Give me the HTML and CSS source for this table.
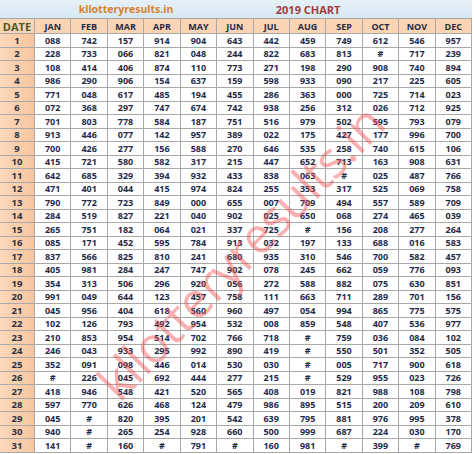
FILE: index.html
```html
<!DOCTYPE html>
<html>
<head>
<meta charset="utf-8">
<link rel="stylesheet" href="styles.css">
</head>
<body>
<div class="sheet">
  <div class="grid">
    <div class="t"></div><div class="t site">kllotteryresults.in</div><div class="t"></div><div class="t chart">2019 CHART</div><div class="t end"></div>
    <div class="h date">DATE</div><div class="h">JAN</div><div class="h">FEB</div><div class="h">MAR</div><div class="h">APR</div><div class="h">MAY</div><div class="h">JUN</div><div class="h">JUL</div><div class="h">AUG</div><div class="h">SEP</div><div class="h">OCT</div><div class="h">NOV</div><div class="h">DEC</div>
    <div class="d">1</div><div>088</div><div>742</div><div>157</div><div>914</div><div>904</div><div>643</div><div>442</div><div>459</div><div>749</div><div>612</div><div>546</div><div>957</div>
    <div class="d">2</div><div>228</div><div>733</div><div>066</div><div>821</div><div>048</div><div>244</div><div>822</div><div>683</div><div>813</div><div>#</div><div>717</div><div>239</div>
    <div class="d">3</div><div>108</div><div>414</div><div>406</div><div>874</div><div>110</div><div>773</div><div>271</div><div>198</div><div>290</div><div>908</div><div>740</div><div>894</div>
    <div class="d">4</div><div>986</div><div>290</div><div>906</div><div>154</div><div>637</div><div>159</div><div>598</div><div>933</div><div>090</div><div>217</div><div>225</div><div>605</div>
    <div class="d">5</div><div>771</div><div>048</div><div>617</div><div>485</div><div>194</div><div>455</div><div>286</div><div>363</div><div>000</div><div>725</div><div>714</div><div>023</div>
    <div class="d">6</div><div>072</div><div>368</div><div>297</div><div>747</div><div>674</div><div>742</div><div>938</div><div>256</div><div>312</div><div>026</div><div>712</div><div>925</div>
    <div class="d">7</div><div>701</div><div>803</div><div>778</div><div>584</div><div>187</div><div>751</div><div>516</div><div>979</div><div>502</div><div>595</div><div>793</div><div>079</div>
    <div class="d">8</div><div>913</div><div>446</div><div>077</div><div>142</div><div>957</div><div>389</div><div>022</div><div>175</div><div>427</div><div>177</div><div>996</div><div>700</div>
    <div class="d">9</div><div>700</div><div>426</div><div>277</div><div>156</div><div>588</div><div>270</div><div>646</div><div>535</div><div>258</div><div>740</div><div>615</div><div>106</div>
    <div class="d">10</div><div>415</div><div>721</div><div>580</div><div>582</div><div>317</div><div>215</div><div>447</div><div>652</div><div>713</div><div>163</div><div>908</div><div>631</div>
    <div class="d">11</div><div>642</div><div>685</div><div>329</div><div>394</div><div>932</div><div>433</div><div>838</div><div>063</div><div>#</div><div>025</div><div>487</div><div>766</div>
    <div class="d">12</div><div>471</div><div>401</div><div>044</div><div>415</div><div>974</div><div>824</div><div>255</div><div>353</div><div>317</div><div>525</div><div>069</div><div>758</div>
    <div class="d">13</div><div>790</div><div>772</div><div>723</div><div>849</div><div>000</div><div>655</div><div>007</div><div>709</div><div>494</div><div>557</div><div>589</div><div>709</div>
    <div class="d">14</div><div>284</div><div>519</div><div>827</div><div>221</div><div>040</div><div>902</div><div>025</div><div>650</div><div>068</div><div>274</div><div>465</div><div>039</div>
    <div class="d">15</div><div>265</div><div>751</div><div>182</div><div>064</div><div>021</div><div>337</div><div>725</div><div>#</div><div>156</div><div>208</div><div>277</div><div>264</div>
    <div class="d">16</div><div>085</div><div>171</div><div>452</div><div>595</div><div>784</div><div>913</div><div>032</div><div>197</div><div>133</div><div>688</div><div>016</div><div>583</div>
    <div class="d">17</div><div>837</div><div>566</div><div>825</div><div>810</div><div>241</div><div>680</div><div>935</div><div>310</div><div>546</div><div>700</div><div>582</div><div>457</div>
    <div class="d">18</div><div>405</div><div>981</div><div>284</div><div>247</div><div>747</div><div>902</div><div>078</div><div>245</div><div>662</div><div>059</div><div>776</div><div>093</div>
    <div class="d">19</div><div>354</div><div>313</div><div>506</div><div>296</div><div>920</div><div>056</div><div>272</div><div>588</div><div>882</div><div>075</div><div>630</div><div>851</div>
    <div class="d">20</div><div>991</div><div>049</div><div>644</div><div>123</div><div>457</div><div>758</div><div>111</div><div>663</div><div>711</div><div>289</div><div>701</div><div>156</div>
    <div class="d">21</div><div>045</div><div>956</div><div>404</div><div>618</div><div>560</div><div>960</div><div>497</div><div>054</div><div>994</div><div>865</div><div>775</div><div>575</div>
    <div class="d">22</div><div>102</div><div>126</div><div>793</div><div>492</div><div>954</div><div>532</div><div>008</div><div>859</div><div>548</div><div>407</div><div>536</div><div>977</div>
    <div class="d">23</div><div>210</div><div>853</div><div>954</div><div>514</div><div>702</div><div>766</div><div>718</div><div>#</div><div>759</div><div>036</div><div>084</div><div>102</div>
    <div class="d">24</div><div>246</div><div>043</div><div>933</div><div>295</div><div>992</div><div>890</div><div>419</div><div>#</div><div>550</div><div>501</div><div>352</div><div>505</div>
    <div class="d">25</div><div>352</div><div>091</div><div>098</div><div>446</div><div>014</div><div>530</div><div>030</div><div>#</div><div>005</div><div>717</div><div>900</div><div>618</div>
    <div class="d">26</div><div>#</div><div>226</div><div>045</div><div>692</div><div>444</div><div>277</div><div>215</div><div>#</div><div>529</div><div>955</div><div>023</div><div>726</div>
    <div class="d">27</div><div>418</div><div>946</div><div>548</div><div>421</div><div>520</div><div>565</div><div>408</div><div>019</div><div>821</div><div>988</div><div>108</div><div>798</div>
    <div class="d">28</div><div>597</div><div>770</div><div>626</div><div>468</div><div>124</div><div>479</div><div>986</div><div>895</div><div>515</div><div>200</div><div>209</div><div>610</div>
    <div class="d">29</div><div>045</div><div>#</div><div>820</div><div>395</div><div>201</div><div>542</div><div>639</div><div>795</div><div>881</div><div>976</div><div>995</div><div>378</div>
    <div class="d">30</div><div>940</div><div>#</div><div>265</div><div>254</div><div>928</div><div>660</div><div>500</div><div>999</div><div>687</div><div>224</div><div>030</div><div>170</div>
    <div class="d">31</div><div>141</div><div>#</div><div>160</div><div>#</div><div>791</div><div>#</div><div>160</div><div>981</div><div>#</div><div>399</div><div>#</div><div>769</div>
  </div>
  <div class="watermark">kllotteryresults.in</div>
</div>
</body>
</html>
```

FILE: styles.css
```css
html, body {
  margin: 0;
  padding: 0;
  background: #ffffff;
}

.sheet {
  position: relative;
  width: 474px;
  height: 454px;
  overflow: hidden;
  font-family: "Open Sans", "Liberation Sans", sans-serif;
}

.grid {
  display: grid;
  width: 472px;
  grid-template-columns: 35px repeat(12, 1fr);
  grid-template-rows: 18px 16px repeat(31, 13.5px);
}

.grid > div {
  box-sizing: border-box;
  display: flex;
  align-items: center;
  justify-content: center;
  border-right: 1px solid #a9a9a9;
  border-bottom: 1px solid #a9a9a9;
  font-size: 9px;
  font-weight: 700;
  color: #1f2b48;
  background: #ffffff;
  line-height: 1;
  white-space: nowrap;
}

.grid > .t {
  border: none;
  background: linear-gradient(#e7f1f8, #d6e8f3);
}

.grid > .site {
  grid-column: 2 / span 5;
  font-size: 10.5px;
  color: #d9812d;
  padding-top: 1px;
}

.grid > .chart {
  grid-column: 8 / span 3;
  font-size: 11px;
  color: #a0403c;
  padding-top: 1px;
}

.grid > .end {
  grid-column: 11 / span 3;
}

.grid > .h {
  background: #fbd4b4;
  border-top: 1px solid #a9a9a9;
  color: #1f2b48;
}

.grid > .h.date {
  font-size: 11px;
  color: #4f5a1c;
}

.grid > .d {
  background: linear-gradient(to right, #fcd8bb, #f7c6a0);
  font-size: 9.5px;
  color: #2a3043;
}

.watermark {
  position: absolute;
  left: 240px;
  top: 252px;
  transform: translate(-50%, -50%) rotate(-46deg);
  font-family: "Open Sans", "Liberation Sans", sans-serif;
  font-size: 50px;
  font-weight: 400;
  color: rgba(240, 80, 80, 0.45);
  white-space: nowrap;
  pointer-events: none;
  letter-spacing: -1px;
}
```
